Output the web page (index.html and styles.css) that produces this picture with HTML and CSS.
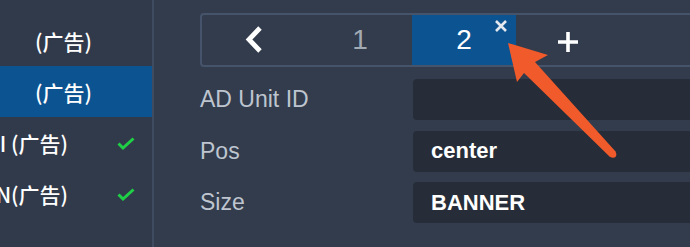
FILE: index.html
```html
<!DOCTYPE html>
<html>
  <head>
    <meta charset="utf-8">
    <link rel="stylesheet" href="styles.css">
    <title>AD Units</title>
  </head>
  <body>
    <div class="app">
      <!--Ad list-->
      <aside class="sidebar">
        <div class="ad-row"><span class="ad-name">(广告)</span></div>
        <div class="ad-row selected"><span class="ad-name">(广告)</span></div>
        <div class="ad-row done">
          <span class="ad-name">SPLASH_I (广告)</span>
          <svg class="check" width="18" height="14" viewBox="0 0 18 14"><polyline points="1.5,6.5 6,11 16.5,1.5"/></svg>
        </div>
        <div class="ad-row done">
          <span class="ad-name">BANNER_MAIN(广告)</span>
          <svg class="check" width="18" height="14" viewBox="0 0 18 14"><polyline points="1.5,6.5 6,11 16.5,1.5"/></svg>
        </div>
      </aside>

      <!--Unit editor-->
      <main class="editor">
        <div class="tabs">
          <div class="tab tab-prev">
            <svg width="20" height="30" viewBox="0 0 20 30"><polyline points="15,3 4,14.5 15,26"/></svg>
          </div>
          <div class="tab">1</div>
          <div class="tab active">
            2
            <svg class="tab-close" width="14" height="14" viewBox="0 0 14 14"><path d="M2 2 L12 12 M12 2 L2 12"/></svg>
          </div>
          <div class="tab tab-add">
            <svg width="22" height="22" viewBox="0 0 22 22"><path d="M11 1 V21 M1 11 H21"/></svg>
          </div>
        </div>

        <div class="fields">
          <div class="field">
            <label class="field-label">AD Unit ID</label>
            <div class="field-input"></div>
          </div>
          <div class="field">
            <label class="field-label">Pos</label>
            <div class="field-input">center</div>
          </div>
          <div class="field">
            <label class="field-label">Size</label>
            <div class="field-input">BANNER</div>
          </div>
        </div>
      </main>

      <!--Annotation arrow-->
      <svg class="annotation" width="690" height="247" viewBox="0 0 690 247">
        <polygon points="508,43 548,55 535,62 616,152 610,157 524,73 517,82"/>
        <circle cx="613" cy="154.5" r="3.3"/>
      </svg>
    </div>
  </body>
</html>
```

FILE: styles.css
```css
html, body {
  margin: 0;
  padding: 0;
  overflow: hidden;
}

body {
  background-color: #323c4d;
  font-family: "Liberation Sans", "Noto Sans CJK SC", sans-serif;
}

.app {
  position: relative;
  display: flex;
  width: 690px;
  height: 247px;
  overflow: hidden;
}

/* sidebar */

.sidebar {
  width: 152px;
  flex-shrink: 0;
  padding-top: 15px;
  background-color: #313a4a;
  border-right: 2px solid #3e4b60;
  overflow: hidden;
}

.ad-row {
  display: flex;
  align-items: center;
  justify-content: flex-end;
  height: 51px;
  padding-right: 60px;
  color: #ffffff;
  font-family: "Noto Sans CJK SC", "Liberation Sans", sans-serif;
  font-size: 21px;
  font-weight: 500;
  white-space: nowrap;
}

.ad-row.selected {
  background-color: #0c5391;
}

.ad-row.done {
  padding-right: 17px;
}

.ad-name {
  flex-shrink: 0;
}

.check {
  flex-shrink: 0;
  margin-left: 49px;
  margin-top: 2px;
}

.check polyline {
  fill: none;
  stroke: #1fd046;
  stroke-width: 3;
}

/* editor */

.editor {
  flex: 1;
  padding-top: 13px;
  padding-left: 46px;
}

.tabs {
  display: flex;
  width: 620px;
  height: 50px;
  border: 2px solid #45546b;
  border-radius: 4px;
}

.tab {
  position: relative;
  display: flex;
  align-items: center;
  justify-content: center;
  width: 104px;
  color: #a2aab4;
  font-size: 28px;
}

.tab-prev {
  width: 106px;
}

.tab-prev polyline {
  fill: none;
  stroke: #ffffff;
  stroke-width: 4.8;
}

.tab.active {
  background-color: #0c5391;
  color: #ffffff;
}

.tab-close {
  position: absolute;
  top: 4px;
  right: 8px;
}

.tab-close path {
  stroke: #e4e9ef;
  stroke-width: 2.6;
}

.tab-add svg {
  margin-top: 3px;
}

.tab-add path {
  stroke: #ffffff;
  stroke-width: 3.6;
}

.fields {
  display: flex;
  flex-direction: column;
  gap: 10.5px;
  margin-top: 12px;
}

.field {
  display: flex;
  align-items: center;
  height: 41px;
}

.field-label {
  width: 213px;
  flex-shrink: 0;
  color: #bec5cf;
  font-size: 23px;
}

.field-input {
  display: flex;
  align-items: center;
  width: 400px;
  height: 41px;
  padding-left: 18px;
  flex-shrink: 0;
  box-sizing: border-box;
  background-color: #262d38;
  border-radius: 4px;
  color: #ffffff;
  font-size: 22px;
  font-weight: bold;
}

/* arrow overlay */

.annotation {
  position: absolute;
  left: 0;
  top: 0;
  pointer-events: none;
}

.annotation polygon,
.annotation circle {
  fill: #f15a2a;
}
```
